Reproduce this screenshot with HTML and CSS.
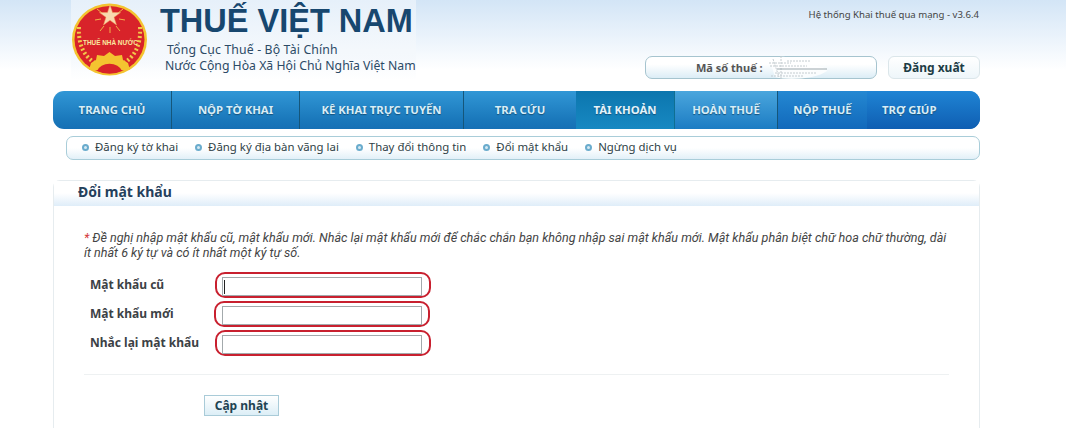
FILE: index.html
```html
<!DOCTYPE html>
<html lang="vi">
<head>
    <meta charset="UTF-8">
    <title>Thuế Việt Nam - Đổi mật khẩu</title>
    <link rel="stylesheet" href="styles.css">
</head>
<body>
    <div class="wrapper">
        <div class="header">
            <div class="brand">
                <svg class="logo" width="78" height="78" viewBox="0 0 78 78">
                    <ellipse cx="38.5" cy="39.5" rx="37.5" ry="36" fill="#f4c430"/>
                    <ellipse cx="38.5" cy="39.5" rx="35" ry="33.5" fill="#d8232a"/>
                    <g fill="none" stroke="#f2c84b" stroke-width="4" stroke-dasharray="2 2.4">
                        <path d="M8 27 C7 45 13 56 24 63"/>
                        <path d="M69 27 C70 45 64 56 53 63"/>
                    </g>
                    <path d="M26 9 L31 13 M52 9 L47 13 M24 20 L30 19 M54 20 L48 19 M29 31 L33 26 M49 31 L45 26 M39 27 V33" stroke="#f0b24a" stroke-width="1" fill="none"/>
                    <path d="M39 5 L41.5 12.6 L49.5 12.6 L43 17.3 L45.5 24.9 L39 20.2 L32.5 24.9 L35 17.3 L28.5 12.6 L36.5 12.6 Z" fill="#f8d9b0" stroke="#f2a35a" stroke-width=".5"/>
                    <path d="M18 70 L20 63 L25 60 L26 55 L33 56 L38.5 52 L44 56 L51 55 L52 60 L57 63 L59 70 Z" fill="#f4c430"/>
                    <path d="M26 71 A13 10 0 0 1 51 71 A30 30 0 0 1 26 71 Z" fill="#d8232a"/>
                    <text class="logo-text" x="12" y="45">THUẾ NHÀ NƯỚC</text>
                </svg>
                <div class="brand-text">
                    <div class="brand-title">THUẾ VIỆT NAM</div>
                    <div class="brand-sub brand-sub-first">Tổng Cục Thuế - Bộ Tài Chính</div>
                    <div class="brand-sub">Nước Cộng Hòa Xã Hội Chủ Nghĩa Việt Nam</div>
                </div>
            </div>
            <div class="header-right">
                <div class="version">Hệ thống Khai thuế qua mạng - v3.6.4</div>
                <div class="user-bar">
                    <div class="tax-code">
                        <span>Mã số thuế :</span>
                        <svg class="tax-mask" width="62" height="26" viewBox="0 0 62 26">
                            <path d="M3 6 C12 -2 30 2 34 10 C50 10 60 12 60 16 C50 24 20 26 8 22 Z" fill="#fff" opacity=".8"/>
                            <g fill="none" stroke="#c4ccd0" stroke-width="1" stroke-dasharray="2 1">
                                <path d="M2 8 H24 M6 4 L12 22 M14 1 V24 M3 11 H40 M20 6 H44 M8 18 H50 M4 21 H36"/>
                            </g>
                            <path d="M10 14 H60" stroke="#9aa6ab" stroke-width="1" fill="none"/>
                        </svg>
                    </div>
                    <a class="logout" href="#">Đăng xuất</a>
                </div>
            </div>
        </div>

        <ul class="nav">
            <li>TRANG CHỦ</li>
            <li>NỘP TỜ KHAI</li>
            <li>KÊ KHAI TRỰC TUYẾN</li>
            <li>TRA CỨU</li>
            <li class="active">TÀI KHOẢN</li>
            <li>HOÀN THUẾ</li>
            <li>NỘP THUẾ</li>
            <li>TRỢ GIÚP</li>
        </ul>

        <ul class="subnav">
            <li>Đăng ký tờ khai</li>
            <li>Đăng ký địa bàn vãng lai</li>
            <li>Thay đổi thông tin</li>
            <li>Đổi mật khẩu</li>
            <li>Ngừng dịch vụ</li>
        </ul>

        <div class="panel">
            <h2 class="panel-title">Đổi mật khẩu</h2>
            <div class="panel-body">
                <p class="note"><span class="star">*</span> Đề nghị nhập mật khẩu cũ, mật khẩu mới. Nhắc lại mật khẩu mới để chắc chắn bạn không nhập sai mật khẩu mới. Mật khẩu phân biệt chữ hoa chữ thường, dài<br>ít nhất 6 ký tự và có ít nhất một ký tự số.</p>
                <form class="form">
                    <div class="form-row">
                        <label for="oldPass">Mật khẩu cũ</label>
                        <div class="ring">
                            <input type="text" id="oldPass">
                            <span class="caret"></span>
                        </div>
                    </div>
                    <div class="form-row">
                        <label for="newPass">Mật khẩu mới</label>
                        <div class="ring ring-wide">
                            <input type="text" id="newPass">
                        </div>
                    </div>
                    <div class="form-row">
                        <label for="rePass">Nhắc lại mật khẩu</label>
                        <div class="ring">
                            <input type="text" id="rePass">
                        </div>
                    </div>
                    <div class="form-actions">
                        <button type="button">Cập nhật</button>
                    </div>
                </form>
            </div>
        </div>
    </div>
</body>
</html>
```

FILE: styles.css
```css
html, body {
    height: 100%;
}
body {
    margin: 0;
    overflow: hidden;
    font-family: "Noto Sans", sans-serif;
    font-size: 12px;
    color: #333;
    background: #fff linear-gradient(#d3e5f6, #e9f2fb 35px, #fff 70px) no-repeat;
}
.wrapper {
    width: 927px;
    margin-left: 53px;
}
.header {
    display: flex;
    justify-content: space-between;
    height: 91px;
}
.brand {
    display: flex;
    height: 80px;
    margin-left: 18px;
    background: linear-gradient(#e6f0fa, #f4f8fc 50px, rgba(255,255,255,0));
}
.logo {
    margin-right: 11px;
}
.logo-text {
    font-family: "Liberation Sans", sans-serif;
    font-size: 6.4px;
    font-weight: bold;
    fill: #f9e9a0;
}
.brand-title {
    margin-top: 3px;
    font-family: "Liberation Sans", sans-serif;
    font-size: 32.5px;
    line-height: 37px;
    font-weight: bold;
    color: #17476f;
    white-space: nowrap;
}
.brand-sub {
    margin-left: 5px;
    font-size: 12.25px;
    line-height: 16px;
    color: #2c4a66;
    white-space: nowrap;
}
.brand-sub-first {
    margin-top: 2px;
    margin-left: 7px;
    letter-spacing: .15px;
}
.header-right {
    display: flex;
    flex-direction: column;
    align-items: flex-end;
}
.version {
    margin-top: 8px;
    margin-right: 1px;
    font-size: 9.6px;
    line-height: 14px;
    color: #444;
}
.user-bar {
    display: flex;
    gap: 11px;
    margin-top: 34px;
}
.tax-code {
    display: flex;
    align-items: center;
    box-sizing: border-box;
    width: 232px;
    height: 23px;
    padding-left: 50px;
    border: 1px solid #a6c4cf;
    border-radius: 7px;
    background: linear-gradient(#fff, #fff 35%, #dcedf6);
    font-weight: bold;
    font-size: 11px;
    color: #555;
}
.tax-mask {
    margin-left: 4px;
}
.logout {
    box-sizing: border-box;
    width: 92px;
    height: 23px;
    border: 1px solid #dbe6ea;
    border-radius: 6px;
    background: linear-gradient(#fff, #eef6fa);
    font-weight: bold;
    font-size: 12px;
    line-height: 21px;
    text-align: center;
    text-decoration: none;
    color: #1d3c45;
}
.nav {
    display: flex;
    height: 38px;
    margin: 0;
    padding: 0;
    list-style: none;
    border-radius: 11px;
    overflow: hidden;
    background: linear-gradient(#3197d6, #1a78bb 75%, #1670b5);
}
.nav li {
    flex: none;
    box-sizing: border-box;
    border-right: 1px solid #15567a;
    font-size: 11.35px;
    font-weight: bold;
    line-height: 37px;
    text-align: center;
    white-space: nowrap;
    color: #d8edf7;
    text-shadow: 0 1px 1px #14527c;
}
.nav li:nth-child(1) { width: 119px; }
.nav li:nth-child(2) { width: 128px; }
.nav li:nth-child(3) { width: 164px; }
.nav li:nth-child(4) { width: 112px; border-right: none; }
.nav li:nth-child(5) { width: 99px; }
.nav li:nth-child(6) { width: 103px; background: linear-gradient(#4aa6dd, #1c7cc3); }
.nav li:nth-child(7) { width: 89px; border-right: none; background: linear-gradient(#2488d2, #1269bb); }
.nav li:nth-child(8) {
    flex: 1;
    padding-left: 15px;
    border-right: none;
    text-align: left;
    background: linear-gradient(#1f84d4, #0f5eb2);
}
.nav li.active {
    background: linear-gradient(#0c76ae, #1789c2);
    border-right-color: #0f6f92;
    color: #e4f3fa;
}
.subnav {
    display: flex;
    gap: 17px;
    box-sizing: border-box;
    height: 24px;
    margin: 7px 0 0 13px;
    padding: 0 0 2px 15px;
    list-style: none;
    border: 1px solid #a9cdd9;
    border-radius: 7px;
    background: linear-gradient(#fff, #fff 50%, #e2f0f8);
    font-size: 11.4px;
    line-height: 20px;
    white-space: nowrap;
    color: #2f3f46;
}
.subnav li {
    display: flex;
    align-items: center;
    gap: 6px;
}
.subnav li::before {
    content: "";
    box-sizing: border-box;
    width: 7px;
    height: 7px;
    border: 2px solid #6aaccd;
    border-radius: 50%;
    background: #d6eaf4;
}
.panel {
    box-sizing: border-box;
    height: 249px;
    margin-top: 20px;
    border: 1px solid #e6ecef;
    border-bottom: none;
    border-radius: 7px 7px 0 0;
}
.panel-title {
    height: 25px;
    margin: 0;
    padding-left: 24px;
    background: linear-gradient(#fff, #fff 12px, #dfedf9);
    font-size: 14px;
    line-height: 22px;
    color: #24405c;
}
.panel-body {
    padding: 24px 30px 0;
}
.note {
    margin: 0;
    font-family: Roboto, sans-serif;
    font-style: italic;
    font-size: 12.55px;
    line-height: 15px;
    white-space: nowrap;
    color: #444;
}
.star {
    color: #d43a3a;
}
.form {
    margin-top: 12px;
}
.form-row {
    display: flex;
    align-items: center;
    height: 26px;
    margin-bottom: 3px;
}
.form-row label {
    box-sizing: border-box;
    width: 131px;
    padding-left: 6px;
    padding-bottom: 2px;
    font-weight: bold;
    color: #3c4145;
}
.ring {
    position: relative;
    display: flex;
    align-items: center;
    box-sizing: border-box;
    width: 216px;
    height: 26px;
    padding-top: 2px;
    padding-left: 5px;
    border: 2px solid #c8202f;
    border-radius: 10px;
}
.ring-wide {
    margin-left: -1px;
    padding-left: 6px;
}
.ring input {
    box-sizing: border-box;
    width: 200px;
    height: 19px;
    padding: 0;
    border: 1px solid #a3a9ac;
    outline: none;
}
.caret {
    position: absolute;
    left: 7px;
    top: 6px;
    width: 1px;
    height: 14px;
    background: #222;
}
.form-actions {
    margin-top: 18px;
    padding-top: 20px;
    padding-left: 120px;
    border-top: 1px solid #eef1f2;
}
.form-actions button {
    box-sizing: border-box;
    width: 75px;
    height: 21px;
    padding: 0;
    border: 1px solid #a9cbd8;
    background: linear-gradient(#fff, #dceef6);
    font-family: "Noto Sans", sans-serif;
    font-size: 12px;
    font-weight: bold;
    color: #1f4352;
}
```
